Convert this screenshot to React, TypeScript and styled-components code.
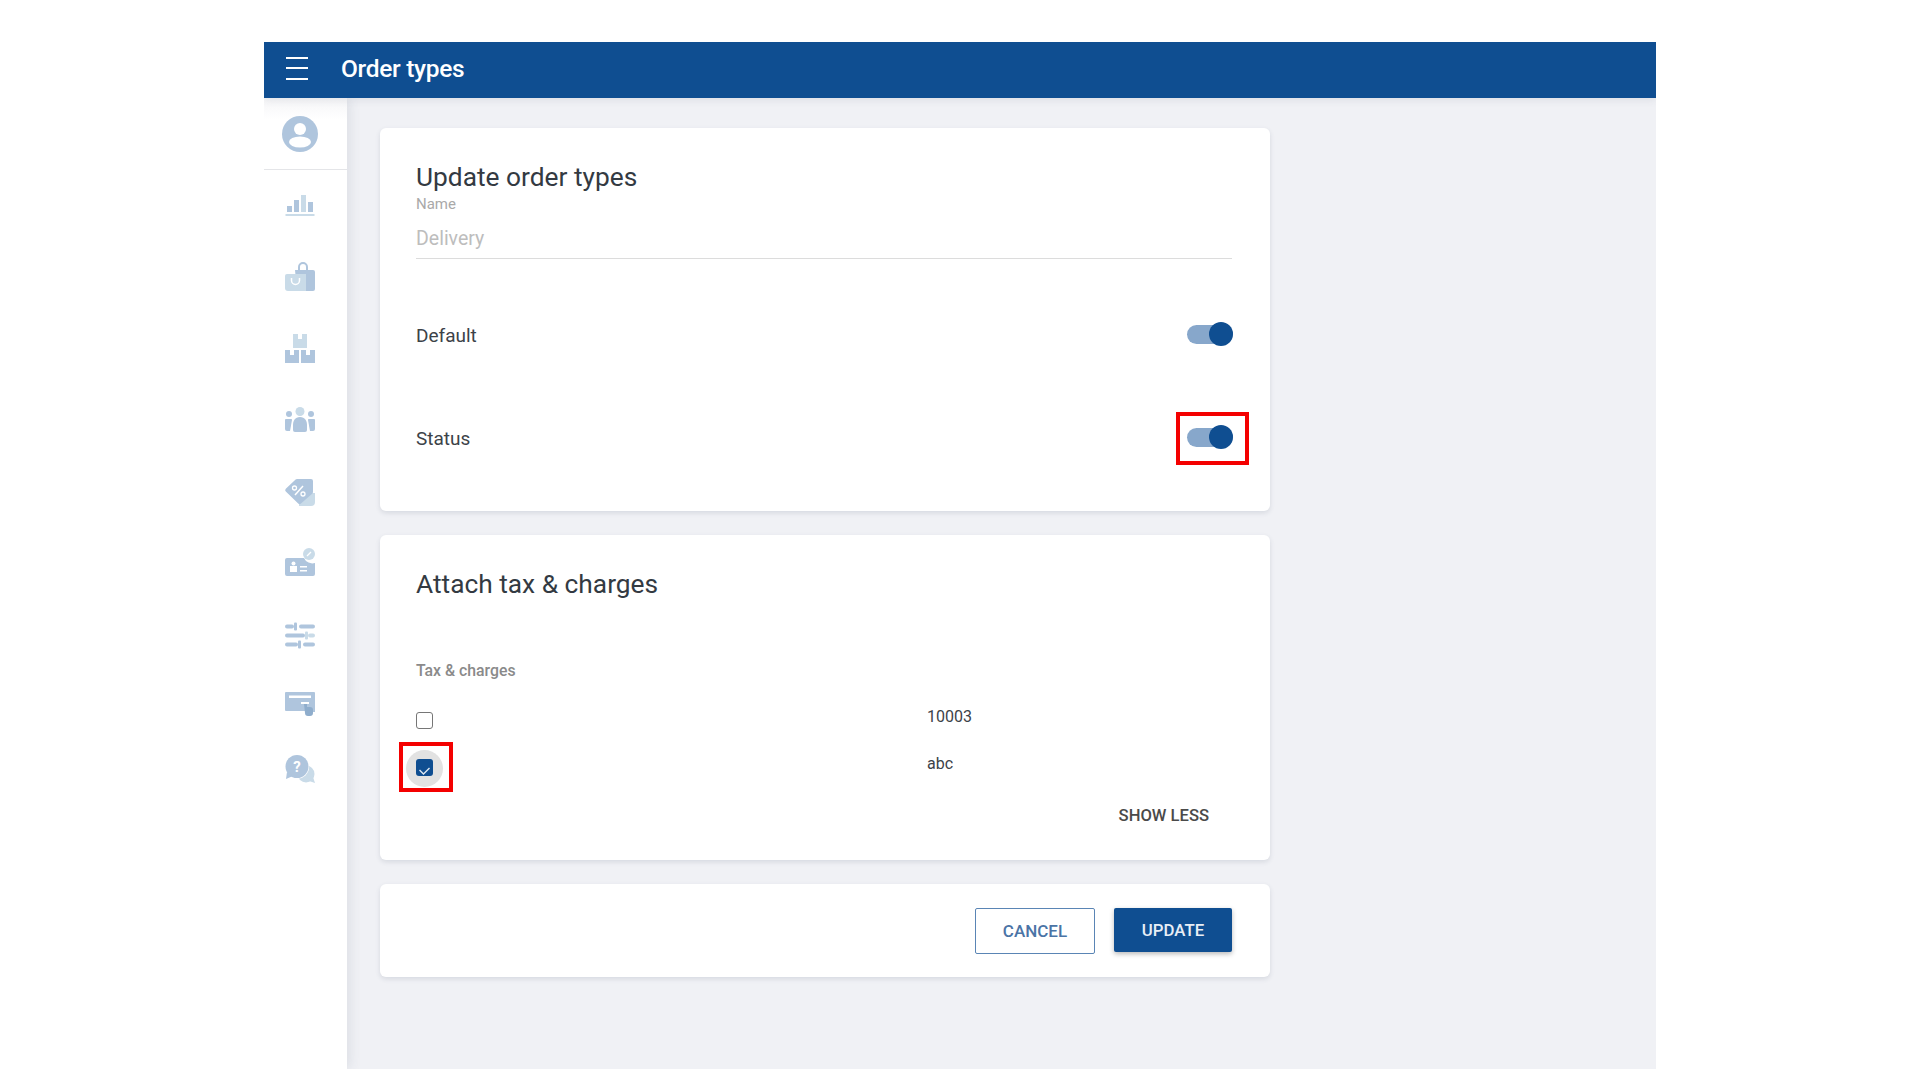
import styled, { createGlobalStyle } from "styled-components";
import { ReactNode } from "react";

const GlobalStyle = createGlobalStyle`
  html, body {
    margin: 0;
    padding: 0;
    background: #fff;
    font-family: Roboto, "Liberation Sans", sans-serif;
  }
  * { box-sizing: border-box; }
`;

const Page = styled.div`
  width: 1920px;
  height: 1080px;
  padding: 42px 264px 11px 264px;
  overflow: hidden;
`;

const Frame = styled.div`
  width: 1392px;
  height: 1027px;
  display: flex;
  flex-direction: column;
  background: #f0f1f5;
  overflow: hidden;
`;

const TopBar = styled.header`
  position: relative;
  z-index: 2;
  height: 56px;
  flex: none;
  background: #0f4e91;
  box-shadow: 0 2px 8px rgba(60, 70, 100, 0.1);
  display: flex;
  align-items: center;
  padding: 0 0 4px 22px;
  gap: 33px;
  color: #fff;
`;

const Burger = styled.div`
  width: 22px;
  display: flex;
  flex-direction: column;
  gap: 8.5px;
  span {
    height: 2px;
    background: #fff;
  }
`;

const Title = styled.h1`
  margin: 0;
  font-size: 24.5px;
  font-weight: 500;
  letter-spacing: -0.3px;
`;

const Body = styled.div`
  flex: 1;
  display: flex;
  min-height: 0;
`;

const Sidebar = styled.nav`
  position: relative;
  width: 83px;
  flex: none;
  background: #fff;
  box-shadow: 2px 0 12px rgba(60, 70, 100, 0.12);
  display: flex;
  flex-direction: column;
  align-items: center;
`;

const ProfileSlot = styled.div`
  width: 100%;
  height: 72px;
  border-bottom: 1px solid #e4e5e8;
  display: flex;
  align-items: center;
  justify-content: center;
  padding-right: 11px;
  background: linear-gradient(#f5f5f7, #fff 30%);
`;

const NavList = styled.div`
  display: flex;
  flex-direction: column;
  padding: 20px 11px 0 0;
  gap: 41.4px;
`;

const NavIcon = styled.svg`
  display: block;
  width: 30px;
  height: 30px;
  overflow: visible;
`;

const Main = styled.main`
  flex: 1;
  padding: 30px 0 0 33px;
  display: flex;
  flex-direction: column;
  align-items: flex-start;
  gap: 24px;
`;

const Card = styled.section<{ $height: number }>`
  width: 890px;
  height: ${(p) => p.$height}px;
  background: #fff;
  border-radius: 6px;
  box-shadow: 0 2px 5px rgba(60, 70, 100, 0.14);
`;

const DetailsBody = styled.div`
  padding: 34px 38px 0 36px;
`;

const CardTitle = styled.h2`
  margin: 0;
  font-size: 26.3px;
  line-height: 30px;
  font-weight: 400;
  color: #333a42;
`;

const FieldLabel = styled.div`
  margin-top: 4px;
  font-size: 15px;
  line-height: 16px;
  color: #a9a9a9;
`;

const FieldValue = styled.div`
  margin-top: 14px;
  height: 33px;
  font-size: 19.5px;
  line-height: 26px;
  color: #bdbdbd;
  border-bottom: 1px solid #dcdcdc;
`;

const ToggleRow = styled.div<{ $top: number }>`
  display: flex;
  align-items: center;
  justify-content: space-between;
  height: 40px;
  margin-top: ${(p) => p.$top}px;
  font-size: 19px;
  color: #3c4248;
`;

const ToggleWrap = styled.div`
  position: relative;
  margin-right: -1px;
`;

const ToggleTrack = styled.div`
  position: relative;
  width: 46px;
  height: 19px;
  border-radius: 10px;
  background: #87a7cb;
  margin-bottom: 2px;
`;

const ToggleThumb = styled.div`
  position: absolute;
  right: 0;
  top: -2.5px;
  width: 24px;
  height: 24px;
  border-radius: 50%;
  background: #0f4e91;
`;

const ToggleMark = styled.div`
  position: absolute;
  left: -11px;
  top: -16px;
  width: 73px;
  height: 53px;
  border: 4px solid #f40000;
`;

const TaxBody = styled.div`
  padding: 34px 38px 0 36px;
`;

const SubHeading = styled.div`
  margin-top: 63px;
  font-size: 15.8px;
  line-height: 18px;
  font-weight: 500;
  color: #8a8a8a;
`;

const TaxRow = styled.div<{ $top: number }>`
  display: flex;
  height: 32px;
  margin-top: ${(p) => p.$top}px;
`;

const CheckCell = styled.div`
  position: relative;
  width: 511px;
  flex: none;
  padding-top: 7px;
`;

const TaxValue = styled.div`
  padding-top: 3px;
  font-size: 16px;
  line-height: 18px;
  color: #3c4248;
`;

const CheckBox = styled.div<{ $checked?: boolean }>`
  position: relative;
  width: 17px;
  height: 17px;
  border-radius: 3px;
  border: ${(p) => (p.$checked ? "none" : "1.5px solid #767676")};
  background: ${(p) => (p.$checked ? "#0f4e91" : "#fff")};
`;

const CheckHalo = styled.div`
  position: absolute;
  left: -10px;
  top: -2px;
  width: 37px;
  height: 37px;
  border-radius: 50%;
  background: #e2e2e2;
`;

const CheckMark = styled.div`
  position: absolute;
  left: -17px;
  top: -10px;
  width: 54px;
  height: 50px;
  border: 4px solid #f40000;
`;

const ShowLess = styled.div`
  margin: 22px 23px 0 0;
  text-align: right;
  font-size: 16.6px;
  line-height: 20px;
  font-weight: 500;
  color: #4a4a4a;
`;

const ActionRow = styled.div`
  height: 100%;
  display: flex;
  align-items: flex-start;
  justify-content: flex-end;
  padding: 24px 38px 0 0;
  gap: 19px;
`;

const OutlineButton = styled.button`
  width: 120px;
  height: 46px;
  border: 1.5px solid #5a85b5;
  border-radius: 2px;
  background: #fff;
  color: #4a74a6;
  font: 500 17px Roboto, sans-serif;
`;

const SolidButton = styled.button`
  width: 118px;
  height: 44px;
  border: none;
  border-radius: 2px;
  background: #0f4e91;
  color: #e8eef6;
  font: 500 16.8px Roboto, sans-serif;
  box-shadow: 0 2px 5px rgba(0, 0, 0, 0.28);
`;

const D = "#afc5dd";
const L = "#c9dbe8";

function Icon({ children }: { children: ReactNode }) {
  return (
    <NavIcon viewBox="0 0 30 30" fill={D}>
      {children}
    </NavIcon>
  );
}

const icons: ReactNode[] = [
  <g transform="translate(0 2)">
    <rect x="2" y="14" width="5" height="6" />
    <rect x="9" y="8" width="5" height="12" />
    <rect x="16" y="3" width="5" height="17" fill={L} />
    <rect x="23" y="10" width="5" height="10" />
    <rect x="0.5" y="22" width="29" height="2" fill={L} />
  </g>,
  <>
    <path d="M10 9h18a2 2 0 0 1 2 2v17a2 2 0 0 1-2 2H12z" />
    <path d="M13 9V6a5 5 0 0 1 10 0v3h-2V6a3 3 0 0 0-6 0v3z" />
    <path d="M2 13h19v17H3a3 3 0 0 1-3-3V15a2 2 0 0 1 2-2z" fill={L} />
    <path d="M6.5 17v2.500a4 4 0 0 0 8 0V17" fill="none" stroke="#fff" strokeWidth="1.5" />
  </>,
  <>
    <path d="M8 1h5v5h4V1h5v14H8z" fill={L} />
    <path d="M0 17h5v5h4v-5h5v13H0z" />
    <path d="M16 17h5v5h4v-5h5v13H16z" />
  </>,
  <g transform="translate(0 2)">
    <circle cx="15" cy="5.5" r="4.5" fill={L} />
    <circle cx="4" cy="8" r="3" />
    <circle cx="26" cy="8" r="3" />
    <path d="M1 13h5c.8 0 1 .5 1 1l-2 11H2a2 2 0 0 1-2-2v-9c0-.5.5-1 1-1z" />
    <path d="M24 13h5c.5 0 1 .5 1 1v9a2 2 0 0 1-2 2h-3l-2-11c0-.5.2-1 1-1z" />
    <path d="M15 11c5 0 7 4 7 8v5a2 2 0 0 1-2 2H10a2 2 0 0 1-2-2v-5c0-4 2-8 7-8z" />
  </g>,
  <>
    <path d="M14 28l8-11h8v9a4 4 0 0 1-4 4H14z" fill={L} />
    <path d="M12 3h14a2 2 0 0 1 2 2v11a2 2 0 0 1-.6 1.4L16 27.500a2 2 0 0 1-2.800 0L.8 15.500a2 2 0 0 1 0-2.800L10.600 3.600A2 2 0 0 1 12 3z" />
    <path d="M10 19l8-9" stroke="#fff" strokeWidth="1.5" />
    <circle cx="9.5" cy="12" r="2" fill="none" stroke="#fff" strokeWidth="1.3" />
    <circle cx="18" cy="18" r="2" fill="none" stroke="#fff" strokeWidth="1.3" />
  </>,
  <g transform="translate(0 1)">
    <path d="M2 10h17a9 9 0 0 0 11 5v11a2 2 0 0 1-2 2H2a2 2 0 0 1-2-2V12a2 2 0 0 1 2-2z" />
    <circle cx="24" cy="6" r="6" fill={L} />
    <path d="M22 8l4-4" stroke="#fff" strokeWidth="1.3" />
    <rect x="5" y="18" width="7" height="6" fill="#fff" />
    <circle cx="8.5" cy="15.5" r="2" fill="#fff" />
    <rect x="15" y="18" width="7" height="1.5" fill="#fff" />
    <rect x="15" y="22" width="7" height="1.5" fill="#fff" />
  </g>,
  <g transform="translate(0 3)">
    <rect x="0" y="3.5" width="9" height="4" rx="2" />
    <rect x="9" y="1.5" width="3" height="8" rx="1" />
    <rect x="14" y="3.5" width="16" height="4" rx="2" />
    <rect x="0" y="12.500" width="20" height="4" rx="2" />
    <rect x="20" y="10.500" width="3" height="8" rx="1" fill={L} />
    <rect x="23" y="12.500" width="7" height="4" rx="2" fill={L} />
    <rect x="0" y="21.500" width="13" height="4" rx="2" />
    <rect x="13" y="19.500" width="3" height="8" rx="1" />
    <rect x="18" y="21.500" width="12" height="4" rx="2" />
  </g>,
  <>
    <path d="M1 2h28a1 1 0 0 1 1 1v19h-8v-1H1a1 1 0 0 1-1-1V3a1 1 0 0 1 1-1z" />
    <rect x="4" y="5.5" width="22" height="2.5" fill="#fff" />
    <rect x="16" y="12" width="8" height="2" fill="#fff" />
    <path d="M19 14h3v3h3a3 3 0 0 1 3 3v3a3 3 0 0 1-3 3h-2a3 3 0 0 1-3-3z" fill="#8fadcc" />
  </>,
  <>
    <circle cx="21" cy="13" r="8.5" fill={L} />
    <path d="M24 20l6 2-2-6z" fill={L} />
    <circle cx="12" cy="5.5" r="12.2" fill="#fff" />
    <circle cx="12" cy="5.5" r="11.5" />
    <path d="M2 11l-1 7 7-3z" />
    <text x="12" y="11" textAnchor="middle" fontSize="15" fontWeight="700" fontFamily="Roboto, sans-serif" fill="#fff">?</text>
  </>,
];

export default function App() {
  return (
    <Page>
      <GlobalStyle />
      <Frame>
        <TopBar>
          <Burger>
            <span />
            <span />
            <span />
          </Burger>
          <Title>Order types</Title>
        </TopBar>
        <Body>
          <Sidebar>
            <ProfileSlot>
              <svg width="36" height="36" viewBox="0 0 36 36">
                <circle cx="18" cy="18" r="18" fill={D} />
                <circle cx="18" cy="13" r="6" fill="#fff" />
                <ellipse cx="18" cy="26" rx="11" ry="5.5" fill="#fff" />
              </svg>
            </ProfileSlot>
            <NavList>
              {icons.map((icon, i) => (
                <Icon key={i}>{icon}</Icon>
              ))}
            </NavList>
          </Sidebar>
          <Main>
            <Card $height={383}>
              <DetailsBody>
                <CardTitle>Update order types</CardTitle>
                <FieldLabel>Name</FieldLabel>
                <FieldValue>Delivery</FieldValue>
                <ToggleRow $top={56}>
                  Default
                  <ToggleWrap>
                    <ToggleTrack>
                      <ToggleThumb />
                    </ToggleTrack>
                  </ToggleWrap>
                </ToggleRow>
                <ToggleRow $top={63}>
                  Status
                  <ToggleWrap>
                    <ToggleTrack>
                      <ToggleThumb />
                    </ToggleTrack>
                    <ToggleMark />
                  </ToggleWrap>
                </ToggleRow>
              </DetailsBody>
            </Card>
            <Card $height={325}>
              <TaxBody>
                <CardTitle>Attach tax &amp; charges</CardTitle>
                <SubHeading>Tax &amp; charges</SubHeading>
                <TaxRow $top={25}>
                  <CheckCell>
                    <CheckBox />
                  </CheckCell>
                  <TaxValue>10003</TaxValue>
                </TaxRow>
                <TaxRow $top={15}>
                  <CheckCell>
                    <CheckHalo />
                    <CheckBox $checked>
                      <svg width="17" height="17" viewBox="0 0 17 17">
                        <path d="M3.5 11l4 4 6-6" fill="none" stroke="#dfe8f2" strokeWidth="1.4" />
                      </svg>
                    </CheckBox>
                    <CheckMark />
                  </CheckCell>
                  <TaxValue>abc</TaxValue>
                </TaxRow>
                <ShowLess>SHOW LESS</ShowLess>
              </TaxBody>
            </Card>
            <Card $height={93}>
              <ActionRow>
                <OutlineButton>CANCEL</OutlineButton>
                <SolidButton>UPDATE</SolidButton>
              </ActionRow>
            </Card>
          </Main>
        </Body>
      </Frame>
    </Page>
  );
}
